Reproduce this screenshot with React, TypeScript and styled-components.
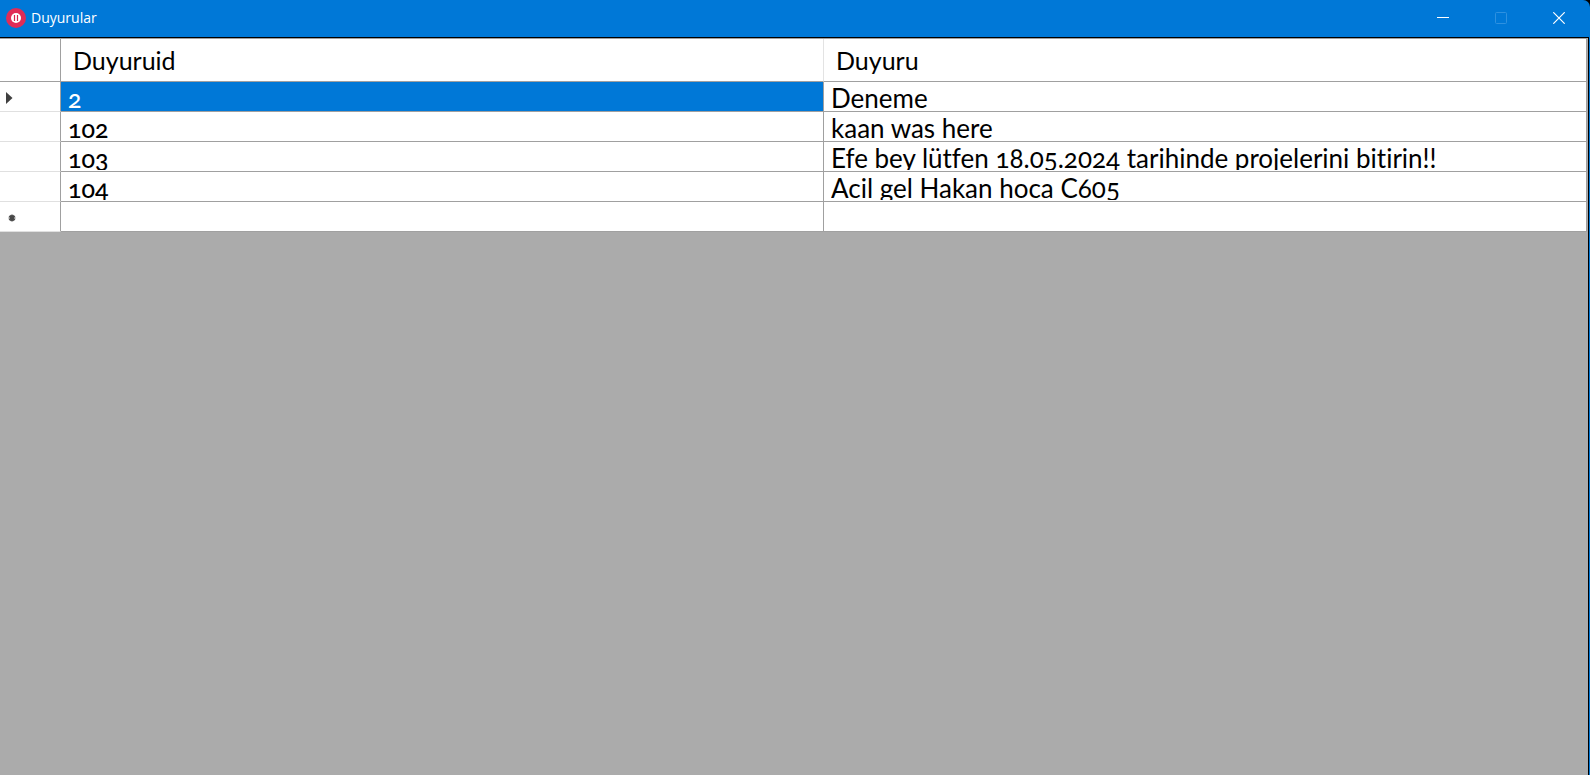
import React from "react";
import styled, { createGlobalStyle } from "styled-components";

const Global = createGlobalStyle`
  html, body, #root { height: 100%; }
  body { margin: 0; background: #000; }
  * { box-sizing: border-box; }
`;

const Window = styled.div`
  min-height: 100%;
  display: flex;
  flex-direction: column;
  background: #0078d7;
  border-top-right-radius: 7px;
  overflow: hidden;
`;

const TitleBar = styled.header`
  display: flex;
  align-items: center;
  height: 37px;
  padding: 0 2px 2px 6px;
  color: #fff;
`;

const Title = styled.h1`
  flex: 1;
  margin: 0 0 0 5px;
  font: 400 14px/20px "Open Sans", sans-serif;
`;

const CaptionButton = styled.button`
  width: 58px;
  height: 34px;
  padding: 0;
  display: flex;
  align-items: center;
  justify-content: center;
  border: 0;
  background: transparent;
  color: #fff;
  &:disabled { color: #2e91e0; }
`;

const Client = styled.main`
  flex: 1;
  margin-right: 1px;
  padding-right: 1px;
  background: #ababab;
  border-top: 1px solid #000;
  border-right: 1px solid #000;
`;

const Grid = styled.table`
  width: 100%;
  table-layout: fixed;
  border-collapse: separate;
  border-spacing: 0;
  border-top: 1px solid #a0a0a0;
  background: #fff;
  color: #000;
  font: 400 25px/30px Lato, sans-serif;
  font-variant-numeric: oldstyle-nums;
  font-variant-ligatures: none;
`;

const MarkerCol = styled.col`
  width: 61px;
`;

const HeadCell = styled.th<{ $light?: boolean }>`
  height: 43px;
  padding: 0 12px;
  text-align: left;
  font-weight: 400;
  border-bottom: 1px solid #a0a0a0;
  border-right: 1px solid ${(p) => (p.$light ? "#e3e3e3" : "#a0a0a0")};
`;

const Marker = styled.th`
  height: 30px;
  padding: 2px 6px 0;
  border-right: 1px solid #a0a0a0;
  border-bottom: 1px solid #e0e0e0;
  svg { display: block; }
`;

const Cell = styled.td<{ $selected?: boolean }>`
  height: 30px;
  padding: 0 0 0 7px;
  vertical-align: top;
  background: ${(p) => (p.$selected ? "#0078d7" : "#fff")};
  color: ${(p) => (p.$selected ? "#fff" : "#000")};
  border-right: 1px solid #a0a0a0;
  border-bottom: 1px solid #a0a0a0;
`;

const CellText = styled.div<{ $numeric?: boolean }>`
  height: 28px;
  font-size: ${(p) => (p.$numeric ? 25 : 26)}px;
  font-weight: ${(p) => (p.$numeric ? 500 : 400)};
  line-height: 32px;
  overflow: hidden;
  white-space: nowrap;
`;

const rows = [
  { id: "2", text: "Deneme" },
  { id: "102", text: "kaan was here" },
  { id: "103", text: "Efe bey lütfen 18.05.2024 tarihinde projelerini bitirin!!" },
  { id: "104", text: "Acil gel Hakan hoca C605" },
];

const AppIcon = () => (
  <svg width="20" height="20" viewBox="0 0 20 20" aria-hidden="true">
    <circle cx="10" cy="10" r="10" fill="#e02c57" />
    <circle cx="10" cy="10" r="5" fill="#fff" />
    <path d="M8.5 7v6M11.5 7v6" stroke="#d8244f" strokeWidth="1.2" />
  </svg>
);

const CurrentIcon = () => (
  <svg width="8" height="12" viewBox="0 0 8 12" role="img" aria-label="Current row">
    <path d="M0 0l6.5 6L0 12z" fill="#404040" />
  </svg>
);

const NewRowIcon = () => (
  <svg width="12" height="8" viewBox="0 0 12 8" role="img" aria-label="New row">
    <path d="M6 .5v7M3 2l6 4M3 6l6-4M2.5 4h7M4.5 1l3 6M7.5 1l-3 6" stroke="#484848" strokeWidth="1.2" />
  </svg>
);

export default function App() {
  return (
    <>
      <Global />
      <Window>
        <TitleBar>
          <AppIcon />
          <Title>Duyurular</Title>
          <CaptionButton aria-label="Minimize">
            <svg width="12" height="12"><path d="M0 5.5h12" stroke="currentColor" /></svg>
          </CaptionButton>
          <CaptionButton aria-label="Maximize" disabled>
            <svg width="12" height="12"><rect x=".5" y=".5" width="11" height="11" rx="1" fill="none" stroke="currentColor" /></svg>
          </CaptionButton>
          <CaptionButton aria-label="Close">
            <svg width="12" height="12"><path d="M.3 .3l11.4 11.4M11.7 .3L.3 11.7" stroke="currentColor" strokeWidth="1.2" /></svg>
          </CaptionButton>
        </TitleBar>
        <Client>
          <Grid>
            <colgroup><MarkerCol /><col /><col /></colgroup>
            <thead>
              <tr>
                <HeadCell aria-label="Row" />
                <HeadCell $light scope="col">Duyuruid</HeadCell>
                <HeadCell scope="col">Duyuru</HeadCell>
              </tr>
            </thead>
            <tbody>
              {rows.map((r, i) => (
                <tr key={r.id}>
                  <Marker scope="row">{i === 0 && <CurrentIcon />}</Marker>
                  <Cell $selected={i === 0}><CellText $numeric>{r.id}</CellText></Cell>
                  <Cell><CellText>{r.text}</CellText></Cell>
                </tr>
              ))}
              <tr>
                <Marker scope="row"><NewRowIcon /></Marker>
                <Cell />
                <Cell />
              </tr>
            </tbody>
          </Grid>
        </Client>
      </Window>
    </>
  );
}
